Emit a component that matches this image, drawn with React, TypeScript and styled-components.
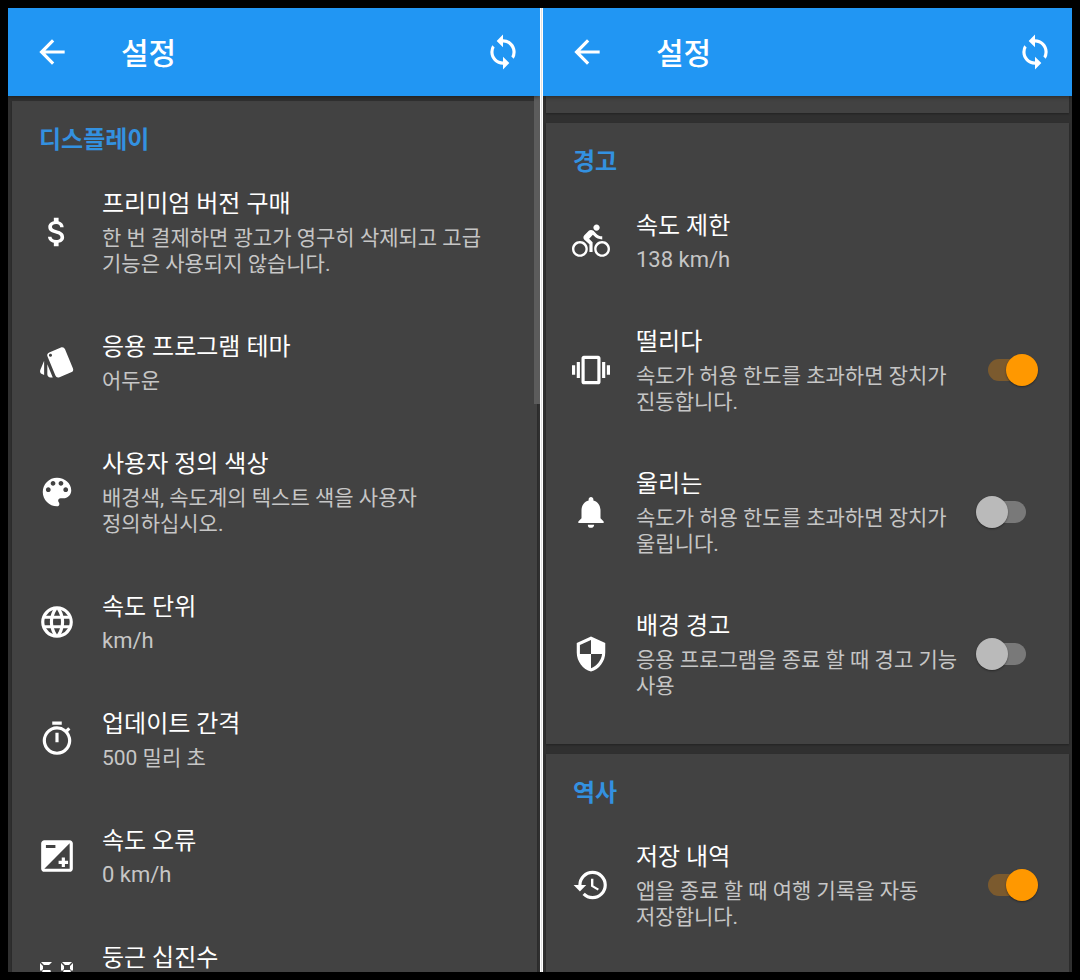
import React, { useState } from "react";
import styled, { createGlobalStyle } from "styled-components";
import type { IconType } from "react-icons";
import {
  MdArrowBack,
  MdAttachMoney,
  MdDirectionsBike,
  MdHistory,
  MdLanguage,
  MdNotifications,
  MdSecurity,
  MdStyle,
  MdSync,
  MdVibration,
} from "react-icons/md";

const GlobalStyle = createGlobalStyle`
  * { box-sizing: border-box; }
  body {
    margin: 0;
    background: #000;
    color: #fff;
    font-family: Roboto, "Noto Sans CJK KR", sans-serif;
    word-break: keep-all;
  }
`;

const Page = styled.main`
  display: flex;
  height: 100vh;
  padding: 8px;
  overflow: hidden;
`;

const Divider = styled.div`
  flex: none;
  width: 3px;
  background: linear-gradient(90deg, #fff 1px, #e0e0e0 1px, #e0e0e0 2px, #fff 2px);
`;

const Pane = styled.section<{ $grow: number }>`
  position: relative;
  display: flex;
  flex: ${(p) => p.$grow} 1 0;
  flex-direction: column;
  min-width: 0;
  overflow: hidden;
  background: #303030;
`;

const AppBar = styled.header`
  position: relative;
  z-index: 1;
  display: flex;
  flex: none;
  align-items: center;
  height: 88px;
  padding: 0 18px 0 25px;
  background: #2196f3;
  box-shadow: 0 1px 4px rgba(0, 0, 0, 0.4);
`;

const AppBarTitle = styled.h1`
  flex: 1;
  margin: 0 0 0 50px;
  padding-top: 3px;
  font-size: 30px;
  font-weight: 500;
  line-height: 40px;
`;

const IconButton = styled.button`
  display: flex;
  padding: 0;
  border: 0;
  background: none;
  color: #fff;
  cursor: pointer;
`;

const List = styled.div<{ $top: number; $left: number }>`
  display: flex;
  flex: 1;
  flex-direction: column;
  gap: 10px;
  min-height: 0;
  padding: ${(p) => p.$top}px 3px 0 ${(p) => p.$left}px;
  overflow: hidden;
`;

const Card = styled.section`
  flex: none;
  padding-bottom: 19px;
  background: #424242;
  box-shadow: 0 1px 2px rgba(0, 0, 0, 0.3);
`;

const CardTail = styled(Card)`
  padding-bottom: 17px;
`;

const CardTitle = styled.h2`
  margin: 0;
  padding: 24px 27px 6px;
  color: #3391e0;
  font-size: 24px;
  font-weight: 700;
  line-height: 30px;
`;

const Row = styled.div<{ $end: number }>`
  display: flex;
  align-items: center;
  gap: 26px;
  width: 100%;
  padding: 25px 15px ${(p) => p.$end}px 26px;
  border: 0;
  background: none;
  color: inherit;
  font: inherit;
  text-align: left;
  cursor: pointer;
`;

const RowText = styled.span`
  flex: 1;
  min-width: 0;
  min-height: 65px;
  padding-top: 3px;
`;

const RowTitle = styled.span`
  display: block;
  margin-bottom: 6px;
  font-size: 24px;
  line-height: 30px;
`;

const RowSummary = styled.span<{ $unit?: boolean }>`
  display: block;
  color: #c6c6c6;
  font-size: ${(p) => (p.$unit ? 22 : 21)}px;
  line-height: 26px;
`;

const Switch = styled.input`
  position: relative;
  flex: none;
  width: 62px;
  height: 32px;
  margin: 0 16px 0 -26px;
  appearance: none;
  cursor: pointer;

  &::before {
    position: absolute;
    inset: 5px 12px;
    border-radius: 11px;
    background: #797979;
    content: "";
  }

  &::after {
    position: absolute;
    top: 0;
    left: 0;
    width: 32px;
    height: 32px;
    border-radius: 50%;
    background: #bababa;
    box-shadow: 0 1px 2px rgba(0, 0, 0, 0.4);
    content: "";
  }

  &:checked::before {
    background: #7b5a2e;
  }

  &:checked::after {
    left: 30px;
    background: #ff9800;
  }
`;

const ScrollThumb = styled.div`
  position: absolute;
  top: 88px;
  right: 0;
  width: 6px;
  height: 308px;
  background: #5c5c5c;
`;

const IconSlot = styled.span`
  display: flex;
  flex: none;
  color: #fff;
`;

type GlyphProps = { size: number };

function Palette({ size }: GlyphProps) {
  return (
    <svg width={size} height={size} viewBox="0 0 24 24" fill="currentColor">
      <path d="M12 3c-4.97 0-9 4.03-9 9s4.03 9 9 9c.83 0 1.5-.67 1.5-1.5 0-.39-.15-.74-.39-1.01-.23-.26-.38-.61-.38-.99 0-.83.67-1.5 1.5-1.5H16c2.76 0 5-2.24 5-5 0-4.42-4.03-8-9-8zm-5.5 9c-.83 0-1.5-.67-1.5-1.5S5.67 9 6.5 9 8 9.67 8 10.5 7.33 12 6.5 12zm3-4C8.67 8 8 7.33 8 6.5S8.67 5 9.5 5s1.5.67 1.5 1.5S10.33 8 9.5 8zm5 0c-.83 0-1.5-.67-1.5-1.5S13.67 5 14.5 5s1.5.67 1.5 1.5S15.33 8 14.5 8zm3 4c-.83 0-1.5-.67-1.5-1.5S16.67 9 17.5 9s1.5.67 1.5 1.5-.67 1.5-1.5 1.5z" />
    </svg>
  );
}

function Exposure({ size }: GlyphProps) {
  return (
    <svg width={size} height={size} viewBox="0 0 24 24" fill="currentColor">
      <path d="M15 17v2h2v-2h2v-2h-2v-2h-2v2h-2v2h2zm5-15H4c-1.1 0-2 .9-2 2v16c0 1.1.9 2 2 2h16c1.1 0 2-.9 2-2V4c0-1.1-.9-2-2-2zM5 5h6v2H5V5zm15 15H4L20 4v16z" />
    </svg>
  );
}

function Stopwatch({ size }: GlyphProps) {
  return (
    <svg width={size} height={size} viewBox="0 0 24 24" fill="currentColor">
      <path d="M15 1H9v2h6V1zm-4 13h2V8h-2v6zm8.03-6.61 1.42-1.42c-.43-.51-.9-.99-1.41-1.41l-1.42 1.42A8.96 8.96 0 0 0 12 4a9 9 0 1 0 7.03 3.39zM12 20c-3.87 0-7-3.13-7-7s3.13-7 7-7 7 3.13 7 7-3.13 7-7 7z" />
    </svg>
  );
}

function SegmentDigits({ size }: GlyphProps) {
  return (
    <svg width={size} height={size} viewBox="0 0 38 38" fill="currentColor">
      <path d="M3 8h11l-3 3H6zM2 9l3 3v3l-2 2-1-1zM5 16h7l1 1-1 2H5l-1-2zM14 18v9l-3-2v-5zM3 28h11l-3-3H6z" />
      <path d="M24 8h10l-3 3h-4zM23 9l3 3v3l-2 2-1-1zM35 9l-3 3v3l2 2 1-1zM26 16h6l1 1-1 2h-6l-1-2zM35 18v9l-3-2v-5zM23 18v9l3-2v-5zM24 28h10l-3-3h-4z" />
      <path d="M17 25h3v3h-3z" />
    </svg>
  );
}

type Item = {
  icon: IconType | React.ComponentType<GlyphProps>;
  title: string;
  summary?: string;
  unit?: boolean;
  checked?: boolean;
};

const displayItems: Item[] = [
  { icon: MdAttachMoney, title: "프리미엄 버전 구매", summary: "한 번 결제하면 광고가 영구히 삭제되고 고급 기능은 사용되지 않습니다." },
  { icon: MdStyle, title: "응용 프로그램 테마", summary: "어두운" },
  { icon: Palette, title: "사용자 정의 색상", summary: "배경색, 속도계의 텍스트 색을 사용자 정의하십시오." },
  { icon: MdLanguage, title: "속도 단위", summary: "km/h", unit: true },
  { icon: Stopwatch, title: "업데이트 간격", summary: "500 밀리 초" },
  { icon: Exposure, title: "속도 오류", summary: "0 km/h", unit: true },
  { icon: SegmentDigits, title: "둥근 십진수" },
];

const warningItems: Item[] = [
  { icon: MdDirectionsBike, title: "속도 제한", summary: "138 km/h", unit: true },
  { icon: MdVibration, title: "떨리다", summary: "속도가 허용 한도를 초과하면 장치가 진동합니다.", checked: true },
  { icon: MdNotifications, title: "울리는", summary: "속도가 허용 한도를 초과하면 장치가 울립니다.", checked: false },
  { icon: MdSecurity, title: "배경 경고", summary: "응용 프로그램을 종료 할 때 경고 기능 사용", checked: false },
];

const historyItems: Item[] = [
  { icon: MdHistory, title: "저장 내역", summary: "앱을 종료 할 때 여행 기록을 자동 저장합니다.", checked: true },
];

function SettingRow({ item, end }: { item: Item; end: number }) {
  const [on, setOn] = useState(Boolean(item.checked));
  const Icon = item.icon;
  const toggles = item.checked !== undefined;
  return (
    <Row as={toggles ? "label" : "button"} $end={end}>
      <IconSlot aria-hidden="true">
        <Icon size={38} />
      </IconSlot>
      <RowText>
        <RowTitle>{item.title}</RowTitle>
        {item.summary && <RowSummary $unit={item.unit}>{item.summary}</RowSummary>}
      </RowText>
      {toggles && (
        <Switch type="checkbox" role="switch" checked={on} onChange={() => setOn(!on)} />
      )}
    </Row>
  );
}

function SettingCard({ title, items, end }: { title: string; items: Item[]; end: number }) {
  return (
    <Card>
      <CardTitle>{title}</CardTitle>
      {items.map((item) => (
        <SettingRow key={item.title} item={item} end={end} />
      ))}
    </Card>
  );
}

function Bar() {
  return (
    <AppBar>
      <IconButton aria-label="뒤로">
        <MdArrowBack size={38} />
      </IconButton>
      <AppBarTitle>설정</AppBarTitle>
      <IconButton aria-label="초기화">
        <MdSync size={38} />
      </IconButton>
    </AppBar>
  );
}

export default function App() {
  return (
    <>
      <GlobalStyle />
      <Page>
        <Pane $grow={532}>
          <Bar />
          <List $top={5} $left={4}>
            <SettingCard title="디스플레이" items={displayItems} end={27} />
          </List>
          <ScrollThumb />
        </Pane>
        <Divider />
        <Pane $grow={529}>
          <Bar />
          <List $top={0} $left={3}>
            <CardTail />
            <SettingCard title="경고" items={warningItems} end={26} />
            <SettingCard title="역사" items={historyItems} end={26} />
          </List>
        </Pane>
      </Page>
    </>
  );
}
